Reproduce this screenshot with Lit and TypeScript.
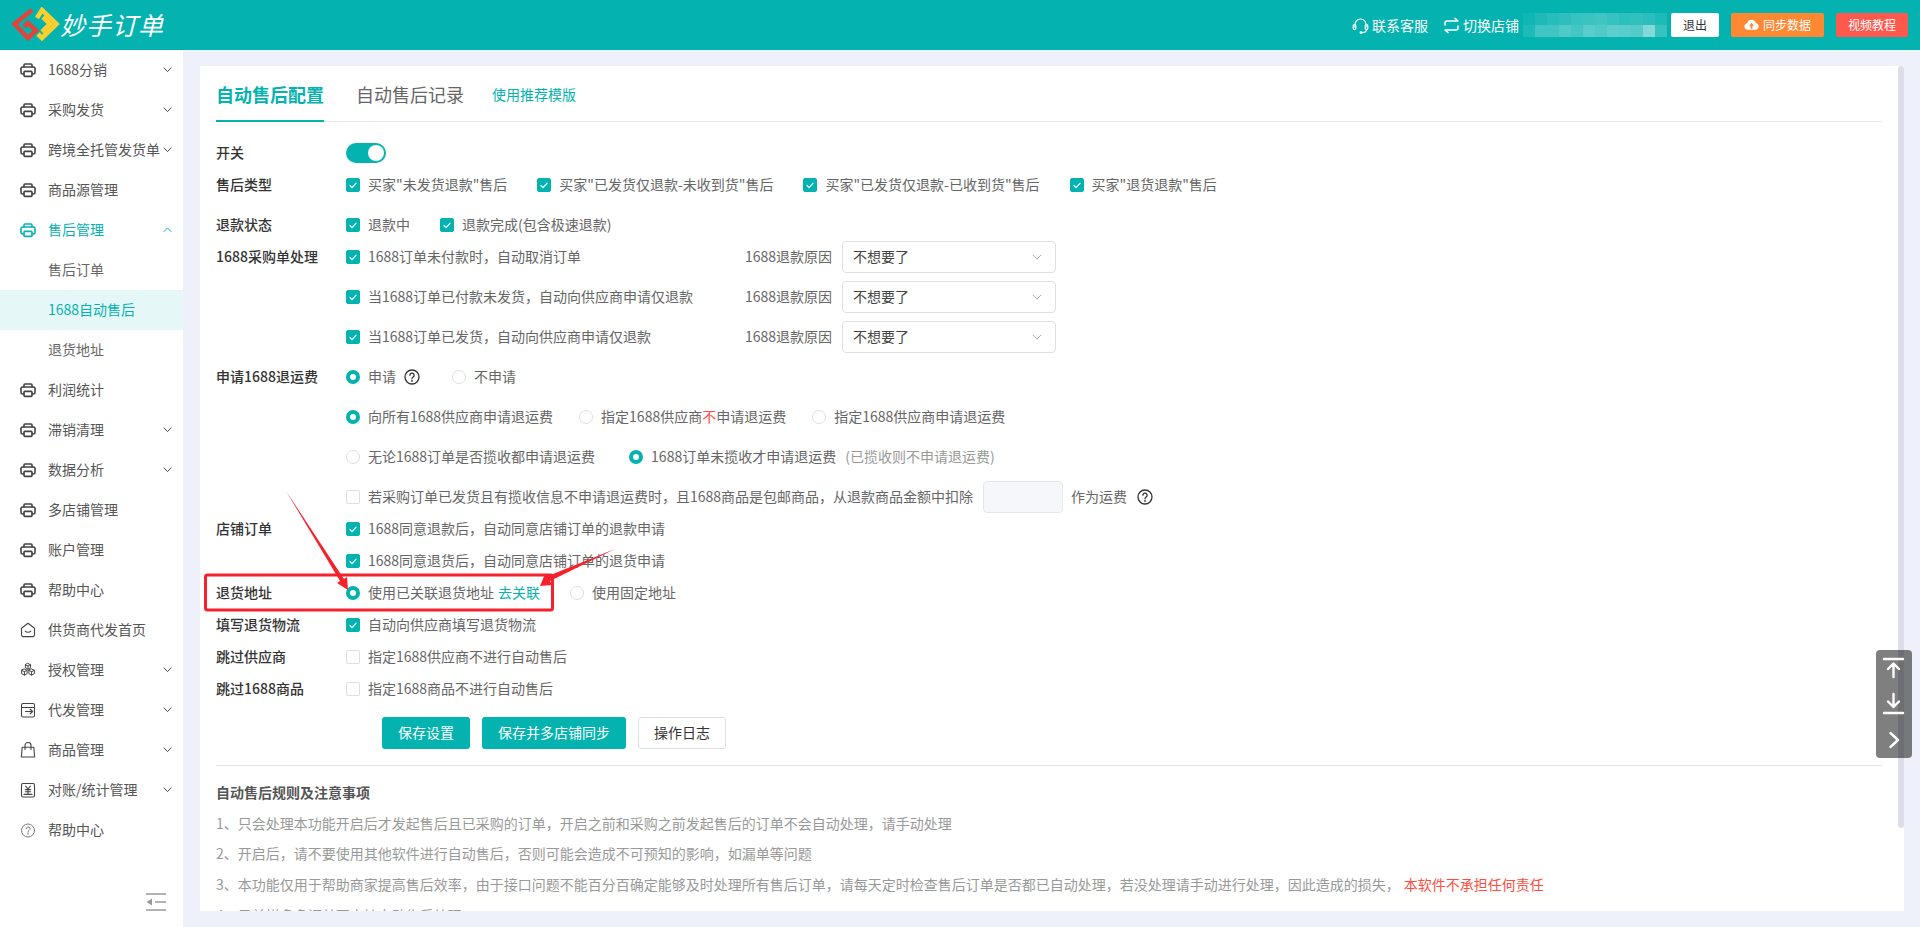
import { LitElement, html, css, svg } from "lit";
import { customElement } from "lit/decorators.js";

const printer = svg`<g stroke-width="1.6"><path d="M4 5V3a1 1 0 0 1 1-1h6a1 1 0 0 1 1 1v2"/><path d="M4 12H2.6A1.6 1.6 0 0 1 1 10.4V6.6A1.6 1.6 0 0 1 2.6 5h10.8A1.6 1.6 0 0 1 15 6.6v3.8a1.6 1.6 0 0 1-1.6 1.6H12"/><rect x="4" y="9.4" width="8" height="5" rx=".8"/></g>`;
const icons: Record<string, any> = {
  printer,
  home: svg`<path d="M1.5 6.2 8 1.2l6.5 5V13a1.6 1.6 0 0 1-1.6 1.6H3.1A1.6 1.6 0 0 1 1.5 13z" stroke-width="1.1"/><path d="M5.2 9.2c1.4 1.4 4.2 1.4 5.6 0" stroke-width="1.1"/>`,
  cubes: svg`<g stroke-width="1"><path d="M8 1.5l2.6 1.3v3L8 7.1 5.4 5.8v-3z"/><path d="M4.4 7l2.7 1.3v3.4l-2.7 1.4-2.8-1.4V8.3z"/><path d="M11.6 7l2.8 1.3v3.4l-2.8 1.4-2.7-1.4V8.3z"/><path d="M5.4 2.8 8 4.1l2.6-1.3M8 4.1v3M1.6 8.3l2.8 1.4 2.7-1.4M4.4 9.7v3.4M8.9 8.3l2.7 1.4 2.8-1.4M11.6 9.7v3.4"/></g>`,
  wallet: svg`<g stroke-width="1.1"><path d="M14.5 4.6V3A1.5 1.5 0 0 0 13 1.5H3A1.5 1.5 0 0 0 1.5 3v10.5A1.5 1.5 0 0 0 3 15h10a1.5 1.5 0 0 0 1.5-1.5V12"/><path d="M1.5 5.5h13v6.5"/><path d="M5.5 9.5h7M10.2 7.2l2.4 2.3-2.4 2.3" stroke-width="1.2"/></g>`,
  bag: svg`<g stroke-width="1.1"><path d="M2.2 5.2h11.6l.8 9.8H1.4z"/><path d="M5 7.5V3.5a3 3 0 0 1 6 0v4"/></g>`,
  yen: svg`<g stroke-width="1.1"><rect x="1.5" y="1.5" width="13" height="13.5" rx="1.4"/><path d="M5.6 4.2 8 7l2.4-2.8M8 7v5M5.3 7.6h5.4M5.3 9.8h5.4M4 12.4h8"/></g>`,
  help: svg`<g stroke="#777" stroke-width="1"><circle cx="8" cy="8.5" r="6.5"/><path d="M6.2 6.8a1.9 1.9 0 1 1 2.8 1.7c-.7.4-1 .8-1 1.5"/><path d="M8 11.2v1"/></g>`,
};

const ico = (n: string, active = false) => html`<svg class="mi ${active ? "on" : ""}" viewBox="0 0 16 16" fill="none" stroke-linecap="round" stroke-linejoin="round">${icons[n]}</svg>`;

const chev = (up = false) => html`<svg class="chev ${up ? "up" : ""}" viewBox="0 0 10 6" fill="none"><path d="M.7.7 5 5 9.3.7"/></svg>`;

interface Menu { t: string; i?: string; c?: boolean; open?: boolean; sub?: boolean; act?: boolean; }
const menu: Menu[] = [
  { t: "1688分销", i: "printer", c: true },
  { t: "采购发货", i: "printer", c: true },
  { t: "跨境全托管发货单", i: "printer", c: true },
  { t: "商品源管理", i: "printer" },
  { t: "售后管理", i: "printer", c: true, open: true },
  { t: "售后订单", sub: true },
  { t: "1688自动售后", sub: true, act: true },
  { t: "退货地址", sub: true },
  { t: "利润统计", i: "printer" },
  { t: "滞销清理", i: "printer", c: true },
  { t: "数据分析", i: "printer", c: true },
  { t: "多店铺管理", i: "printer" },
  { t: "账户管理", i: "printer" },
  { t: "帮助中心", i: "printer" },
  { t: "供货商代发首页", i: "home" },
  { t: "授权管理", i: "cubes", c: true },
  { t: "代发管理", i: "wallet", c: true },
  { t: "商品管理", i: "bag", c: true },
  { t: "对账/统计管理", i: "yen", c: true },
  { t: "帮助中心", i: "help" },
];

const mosaic = [
  [0.05, 0.1, 0.14, 0.17, 0.2, 0.22, 0.24, 0.2, 0.16, 0.18, 0.15, 0.1],
  [0.1, 0.24, 0.24, 0.3, 0.26, 0.34, 0.3, 0.36, 0.34, 0.32, 0.5, 0.2],
];

const ck = (t: unknown, on = true, cls = "") => html`<span class="opt ${cls}"><span class="cb ${on ? "on" : ""}">${on ? html`<svg viewBox="0 0 14 14" fill="none"><path d="M3.6 7.2l2.4 2.4 4.4-4.8"/></svg>` : ""}</span><span class="tx">${t}</span></span>`;
const rd = (t: unknown, on = false, cls = "") => html`<span class="opt ${cls}"><span class="rd ${on ? "on" : ""}"></span><span class="tx">${t}</span></span>`;
const qm = html`<svg class="qm" viewBox="0 0 16 16" fill="none"><circle cx="8" cy="8" r="7"/><path d="M5.9 6.2a2.1 2.1 0 1 1 3.2 1.8c-.8.5-1.1.9-1.1 1.7"/><path d="M8 11.4v1"/></svg>`;
const reason = html`<span class="reason">1688退款原因</span><span class="sel"><span class="tx">不想要了</span><svg viewBox="0 0 12 7" fill="none"><path d="M1 1l5 5 5-5"/></svg></span>`;

@customElement("app-root")
export class AppRoot extends LitElement {
  static styles = css`
    :host { display: block; width: 1920px; height: 927px; overflow: hidden; position: relative; font-family: "Noto Sans CJK SC", "Noto Sans", sans-serif; font-size: 14px; color: #666; background: #eef1f9; }
    * { box-sizing: border-box; }
    .top { height: 50px; background: #04b3b0; display: flex; align-items: center; padding: 0 12px 0 11px; color: #fff; }
    .logo { width: 50px; height: 36px; flex: none; }
    .brand { margin-left: -1px; font-size: 25px; font-style: italic; letter-spacing: 1px; line-height: 50px; white-space: nowrap; padding-bottom: 2px; }
    .spacer { flex: 1; }
    .tl { display: flex; align-items: center; font-size: 14px; gap: 3px; white-space: nowrap; margin-right: 15px; }
    .tl svg { width: 17px; height: 17px; }
    .tl.sw { margin-right: 4px; }
    .mos { display: grid; grid-template-columns: repeat(12, 12px); grid-auto-rows: 12px; margin-right: 4px; }
    .mos i { display: block; background: #fff; }
    .hb { height: 24px; border-radius: 2px; font-size: 12px; display: flex; align-items: center; justify-content: center; color: #fff; gap: 4px; margin-left: 12px; padding-bottom: 1px; }
    .hb.out { width: 48px; background: #fff; color: #333; margin-left: 0; }
    .hb.sync { width: 93px; background: #ff8833; }
    .hb.sync svg { width: 15px; height: 15px; }
    .hb.vid { width: 72px; background: #ff584c; }
    .body { display: flex; height: 877px; }
    .side { width: 183px; flex: none; background: #fff; display: flex; flex-direction: column; }
    .mitem { height: 40px; flex: none; display: flex; align-items: center; padding: 0 11px 0 20px; color: #555; white-space: nowrap; }
    .mitem.sub { padding-left: 48px; color: #666; }
    .mitem.open { color: #04b3b0; }
    .mitem.act { background: #e6f7f7; color: #04b3b0; }
    .mi { width: 16px; height: 16px; margin-right: 12px; flex: none; stroke: #444; }
    .mi.on { stroke: #04b3b0; }
    .mt { flex: 1; min-width: 0; padding-bottom: 2px; }
    .chev { width: 9px; height: 5.5px; flex: none; stroke: #444; stroke-width: 1.1; }
    .chev.up { transform: rotate(180deg); stroke: #04b3b0; }
    .coll { margin-top: auto; padding: 0 17px 16px 0; display: flex; justify-content: flex-end; }
    .coll svg { width: 20px; height: 18px; }
    .main { flex: 1; padding: 16px 16px 16px 17px; min-width: 0; }
    .card { position: relative; height: 845px; background: #fff; overflow: hidden; padding: 0 22px 0 16px; }
    .bar { position: absolute; right: 0; top: 0; width: 6px; height: 762px; background: #dcdfe8; border-radius: 3px; }
    .tabs { height: 56px; display: flex; align-items: flex-start; border-bottom: 1px solid #e8eaf0; white-space: nowrap; }
    .tab { height: 56px; line-height: 56px; font-size: 18px; color: #666; margin-right: 32px; }
    .tab.on { color: #04b3b0; font-weight: 700; border-bottom: 2px solid #04b3b0; }
    .tabs a { color: #04b3b0; font-size: 14px; line-height: 56px; margin-left: -4px; }
    .form { margin-top: 15px; }
    .row { height: 32px; display: flex; align-items: center; white-space: nowrap; }
    .row.sp { margin-top: 8px; }
    .lab { width: 130px; flex: none; color: #333; font-weight: 500; padding-bottom: 2px; }
    .opt { display: inline-flex; align-items: center; gap: 8px; margin-right: 30px; }
    .opt.m26 { margin-right: 26px; }
    .opt.m34 { margin-right: 34px; }
    .opt.m8 { margin-right: 8px; }
    .opt.m0 { margin-right: 0; }
    .tx { padding-bottom: 2px; }
    .cb { width: 14px; height: 14px; border: 1px solid #dcdfe6; border-radius: 2px; display: block; flex: none; background: #fff; }
    .cb.on { background: #04b3b0; border-color: #04b3b0; }
    .cb svg { display: block; width: 14px; height: 14px; margin: -1px; stroke: #fff; stroke-width: 1.2; }
    .rd { width: 14px; height: 14px; border: 1px solid #dcdfe6; border-radius: 50%; display: block; flex: none; background: #fff; }
    .rd.on { border: 4px solid #04b3b0; }
    .tog { width: 40px; height: 20px; border-radius: 10px; background: #04b3b0; display: flex; justify-content: flex-end; align-items: center; padding: 2px; }
    .tog i { width: 16px; height: 16px; border-radius: 50%; background: #fff; display: block; }
    .fix1 { width: 399px; flex: none; }
    .fix1 .opt { margin: 0; }
    .reason { width: 97px; flex: none; padding-bottom: 2px; }
    .sel { width: 214px; height: 32px; border: 1px solid #dcdfe6; border-radius: 4px; padding: 0 10px; color: #444; display: flex; align-items: center; justify-content: space-between; }
    .sel svg { width: 10px; height: 6px; stroke: #999; stroke-width: 1; margin-right: 3px; }
    .qm { width: 16px; height: 16px; flex: none; stroke: #333; stroke-width: 1.3; stroke-linecap: round; }
    .red { color: #ff4d3f; }
    .gray { color: #999; margin-left: 9px; }
    .link { color: #04b3b0; margin-left: 4px; }
    .inp { width: 80px; height: 32px; background: #f5f7fa; border: 1px solid #e4e7ed; border-radius: 4px; margin: 0 8px 0 10px; flex: none; }
    .gap32 { width: 32px; flex: none; }
    .gap10 { width: 10px; flex: none; }
    .btns { display: flex; gap: 12px; margin: 12px 0 0 166px; }
    .btn { height: 32px; border-radius: 3px; display: flex; align-items: center; justify-content: center; background: #04b3b0; color: #fff; padding-bottom: 2px; }
    .btn.a { width: 88px; }
    .btn.b { width: 144px; }
    .btn.c { width: 88px; background: #fff; color: #333; border: 1px solid #dcdfe6; }
    .div { height: 1px; background: #e4e4e8; margin: 16px 0 12px; }
    .note { line-height: 28.7px; padding-bottom: 2px; color: #999; white-space: nowrap; }
    .note.h { color: #555; font-weight: 700; }
    .note .red { margin-left: 4px; }
    .anno { position: absolute; left: 0; top: 0; width: 1920px; height: 927px; pointer-events: none; }
    .float { position: absolute; left: 1876px; top: 650px; width: 36px; height: 108px; background: rgba(0, 0, 0, .5); border-radius: 4px; display: flex; flex-direction: column; }
    .float svg { width: 36px; height: 36px; stroke: #fff; stroke-width: 2.4; fill: none; stroke-linecap: round; stroke-linejoin: round; }
  `;

  render() {
    return html`
      <div class="top">
        <svg class="logo" viewBox="11 8 50 36" fill="none" stroke-width="4.6">
          <path d="M32 11 14.5 25 28 39l8-7.5-8-7.5-4 3.5" stroke="#e0443a"/>
          <path d="M37 19l5-8 14.5 14L42 39l-4-4" stroke="#fbcf2e"/>
          <path d="M43 18l7 7-8 8" stroke="#fbcf2e"/>
        </svg>
        <span class="brand">妙手订单</span>
        <span class="spacer"></span>
        <span class="tl"><svg viewBox="0 0 17 17" fill="none" stroke="#fff" stroke-width="1.2" stroke-linecap="round"><path d="M3 10V7.5a5.5 5.5 0 0 1 11 0V10"/><rect x="1.2" y="7.5" width="2.6" height="5" rx="1.3"/><rect x="13.2" y="7.5" width="2.6" height="5" rx="1.3"/><path d="M14.5 12.5c0 2-1.8 3-4 3"/><circle cx="9" cy="15.4" r=".9"/></svg>联系客服</span>
        <span class="tl sw"><svg viewBox="0 0 17 17" fill="none" stroke="#fff" stroke-width="1.5" stroke-linecap="round" stroke-linejoin="round"><path d="M2 8V6a2 2 0 0 1 2-2h11l-3-2.6"/><path d="M15 9v2a2 2 0 0 1-2 2H2l3 2.6"/></svg>切换店铺</span>
        <span class="mos">${mosaic.flat().map((a) => html`<i style="opacity:${a}"></i>`)}</span>
        <span class="hb out">退出</span>
        <span class="hb sync"><svg viewBox="0 0 16 16"><path fill="#fff" d="M4 13.5a3.5 3.5 0 0 1-.6-6.95 4.8 4.8 0 0 1 9.3.1A3.45 3.45 0 0 1 12.2 13.5z"/><path fill="#ff8833" d="M8 6.2l2.6 3H9v3.2H7V9.2H5.4z"/></svg>同步数据</span>
        <span class="hb vid">视频教程</span>
      </div>
      <div class="body">
        <nav class="side">
          ${menu.map((m) => html`<div class="mitem ${m.sub ? "sub" : ""} ${m.open ? "open" : ""} ${m.act ? "act" : ""}">
            ${m.i ? ico(m.i, m.open) : ""}<span class="mt">${m.t}</span>${m.c ? chev(m.open) : ""}
          </div>`)}
          <div class="coll"><svg viewBox="0 0 20 18" fill="none" stroke="#999" stroke-width="1.4"><path d="M0 1h20M9 9h11M0 17h20"/><path d="M6 5.5v7L0.5 9z" fill="#999" stroke="none"/></svg></div>
        </nav>
        <div class="main">
          <section class="card">
            <div class="tabs">
              <span class="tab on">自动售后配置</span>
              <span class="tab">自动售后记录</span>
              <a>使用推荐模版</a>
            </div>
            <div class="form">
              <div class="row"><span class="lab">开关</span><span class="tog"><i></i></span></div>
              <div class="row"><span class="lab">售后类型</span>${ck('买家"未发货退款"售后')}${ck('买家"已发货仅退款-未收到货"售后')}${ck('买家"已发货仅退款-已收到货"售后')}${ck('买家"退货退款"售后')}</div>
              <div class="row sp"><span class="lab">退款状态</span>${ck("退款中")}${ck("退款完成(包含极速退款)")}</div>
              <div class="row"><span class="lab">1688采购单处理</span><span class="fix1">${ck("1688订单未付款时，自动取消订单")}</span>${reason}</div>
              <div class="row sp"><span class="lab"></span><span class="fix1">${ck("当1688订单已付款未发货，自动向供应商申请仅退款")}</span>${reason}</div>
              <div class="row sp"><span class="lab"></span><span class="fix1">${ck("当1688订单已发货，自动向供应商申请仅退款")}</span>${reason}</div>
              <div class="row sp"><span class="lab">申请1688退运费</span>${rd("申请", true, "m8")}${qm}<span class="gap32"></span>${rd("不申请")}</div>
              <div class="row sp"><span class="lab"></span>${rd("向所有1688供应商申请退运费", true, "m26")}${rd(html`指定1688供应商<span class="red">不</span>申请退运费`, false, "m26")}${rd("指定1688供应商申请退运费")}</div>
              <div class="row sp"><span class="lab"></span>${rd("无论1688订单是否揽收都申请退运费", false, "m34")}${rd(html`1688订单未揽收才申请退运费<span class="gray">(已揽收则不申请退运费)</span>`, true)}</div>
              <div class="row sp"><span class="lab"></span>${ck("若采购订单已发货且有揽收信息不申请退运费时，且1688商品是包邮商品，从退款商品金额中扣除", false, "m0")}<span class="inp"></span><span class="tx">作为运费</span><span class="gap10"></span>${qm}</div>
              <div class="row"><span class="lab">店铺订单</span>${ck("1688同意退款后，自动同意店铺订单的退款申请")}</div>
              <div class="row"><span class="lab"></span>${ck("1688同意退货后，自动同意店铺订单的退货申请")}</div>
              <div class="row"><span class="lab">退货地址</span>${rd(html`使用已关联退货地址<span class="link">去关联</span>`, true)}${rd("使用固定地址")}</div>
              <div class="row"><span class="lab">填写退货物流</span>${ck("自动向供应商填写退货物流")}</div>
              <div class="row"><span class="lab">跳过供应商</span>${ck("指定1688供应商不进行自动售后", false)}</div>
              <div class="row"><span class="lab">跳过1688商品</span>${ck("指定1688商品不进行自动售后", false)}</div>
            </div>
            <div class="btns"><span class="btn a">保存设置</span><span class="btn b">保存并多店铺同步</span><span class="btn c">操作日志</span></div>
            <div class="div"></div>
            <div class="note h">自动售后规则及注意事项</div>
            <div class="note">1、只会处理本功能开启后才发起售后且已采购的订单，开启之前和采购之前发起售后的订单不会自动处理，请手动处理</div>
            <div class="note">2、开启后，请不要使用其他软件进行自动售后，否则可能会造成不可预知的影响，如漏单等问题</div>
            <div class="note">3、本功能仅用于帮助商家提高售后效率，由于接口问题不能百分百确定能够及时处理所有售后订单，请每天定时检查售后订单是否都已自动处理，若没处理请手动进行处理，因此造成的损失，<span class="red">本软件不承担任何责任</span></div>
            <div class="note">4、目前拼多多订单不支持自动售后处理</div>
            <div class="bar"></div>
          </section>
        </div>
      </div>
      <svg class="anno" viewBox="0 0 1920 927" fill="none">
        <rect x="205.5" y="575" width="347" height="35" rx="2" stroke="#f5222d" stroke-width="3"/>
        <polygon points="286,491 344,579 347,577 348,590 337,583 340,581" fill="#f5222d"/>
        <polygon points="615,549 548,576 545,574 540,586 552,585 550,581" fill="#f5222d"/>
      </svg>
      <div class="float">
        <svg viewBox="0 0 36 36"><path d="M8 9h19M17.500 14v13M12 19l5.500-5.500L23 19"/></svg>
        <svg viewBox="0 0 36 36"><path d="M17.500 8v13M12 15.500l5.500 5.500L23 15.500M8 27h19"/></svg>
        <svg viewBox="0 0 36 36"><path d="M14.500 11l7.500 7-7.500 7"/></svg>
      </div>
    `;
  }
}
